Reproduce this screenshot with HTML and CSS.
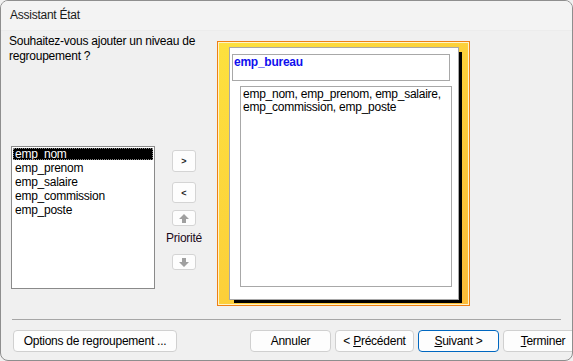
FILE: index.html
```html
<!DOCTYPE html>
<html lang="fr">
<head>
    <meta charset="UTF-8">
    <title>Assistant État</title>
    <link rel="stylesheet" href="styles.css">
</head>
<body>
    <div class="window">
        <div class="titlebar">Assistant État</div>
        <div class="main">
            <div class="left">
                <p class="question">Souhaitez-vous ajouter un niveau de regroupement ?</p>
                <div class="picker">
                    <ul class="listbox">
                        <li class="selected"><span>emp_nom</span></li>
                        <li>emp_prenom</li>
                        <li>emp_salaire</li>
                        <li>emp_commission</li>
                        <li>emp_poste</li>
                    </ul>
                    <div class="movebtns">
                        <button class="small btn-add">&gt;</button>
                        <button class="small btn-remove">&lt;</button>
                        <button class="small arrow">
                            <svg width="10" height="9" viewBox="0 0 10 9"><path d="M5 0 L10 5 L7 5 L7 9 L3 9 L3 5 L0 5 Z" fill="#a0a0a0"/></svg>
                        </button>
                        <span class="prio">Priorité</span>
                        <button class="small arrow">
                            <svg width="10" height="9" viewBox="0 0 10 9"><path d="M5 9 L10 4 L7 4 L7 0 L3 0 L3 4 L0 4 Z" fill="#a0a0a0"/></svg>
                        </button>
                    </div>
                </div>
            </div>
            <div class="preview">
                <div class="page">
                    <div class="group">emp_bureau</div>
                    <div class="detail">emp_nom, emp_prenom, emp_salaire, emp_commission, emp_poste</div>
                </div>
            </div>
        </div>
        <div class="sep"></div>
        <div class="footer">
            <button class="btn btn-options">Options de re<u>g</u>roupement ...</button>
            <button class="btn btn-cancel">Annuler</button>
            <button class="btn btn-prev">&lt; <u>P</u>récédent</button>
            <button class="btn btn-next"><u>S</u>uivant &gt;</button>
            <button class="btn btn-finish"><u>T</u>erminer</button>
        </div>
    </div>
</body>
</html>
```

FILE: styles.css
```css
html, body {
    margin: 0;
    padding: 0;
    background: #f0f0f0;
}
body {
    font-family: "Liberation Sans", Arial, sans-serif;
    font-size: 12px;
    letter-spacing: -0.25px;
    color: #000;
}
.window {
    width: 573px;
    height: 361px;
    box-sizing: border-box;
    border: 1px solid #8e8e8e;
    border-radius: 8px;
    background: #f0f0f0;
    overflow: hidden;
    display: flex;
    flex-direction: column;
}
.titlebar {
    height: 29px;
    line-height: 28px;
    padding-left: 9px;
    background: #f3f3f3;
    border-bottom: 1px solid #ececec;
    color: #1a1a1a;
}
.main {
    height: 288px;
    display: flex;
    align-items: flex-start;
    padding-left: 8px;
}
.left {
    width: 208px;
}
.question {
    margin: 3px 0 0 0;
    line-height: 15px;
    width: 200px;
}
.picker {
    display: flex;
    align-items: flex-start;
    margin-top: 82px;
}
.listbox {
    list-style: none;
    margin: 0 0 0 2px;
    padding: 1px;
    width: 140px;
    height: 139px;
    background: #fff;
    border: 1px solid #8a8a8a;
}
.listbox li {
    height: 14px;
    line-height: 14px;
    padding-left: 2px;
}
.listbox li.selected {
    background: #000;
    color: #fff;
    height: 12px;
    line-height: 12px;
    margin-bottom: 1px;
    outline: 1px dotted #888;
    outline-offset: -1px;
}
.movebtns {
    width: 44px;
    margin-left: 7px;
    display: flex;
    flex-direction: column;
    align-items: center;
    padding-top: 4px;
}
.small {
    width: 24px;
    height: 22px;
    padding: 0;
    background: #fdfdfd;
    border: 1px solid #d4d4d4;
    border-radius: 3px;
    font-family: "Liberation Sans", Arial, sans-serif;
    font-size: 9px;
    font-weight: bold;
    color: #222;
    display: flex;
    align-items: center;
    justify-content: center;
}
.btn-remove {
    margin-top: 10px;
    height: 21px;
}
.arrow {
    height: 16px;
    margin-top: 7px;
}
.prio {
    display: block;
    line-height: 14px;
    margin-top: 5px;
    color: #1a0a1a;
}
.prio + .arrow {
    margin-top: 9px;
}
.preview {
    margin-top: 10px;
    width: 253px;
    height: 265px;
    box-sizing: border-box;
    border: 1px solid #ef7f14;
    box-shadow: inset 0 0 0 1px #fff4c8;
    background: linear-gradient(135deg, #fde13e 0%, #fcd03a 50%, #fbbc38 100%);
    padding: 5px 0 0 11px;
}
.page {
    width: 230px;
    height: 253px;
    box-sizing: border-box;
    border: 1px solid #a8a8a8;
    background: #fff;
    box-shadow: 4px 4px 0 -1px #000;
    padding: 6px 0 0 2px;
}
.group {
    width: 218px;
    height: 27px;
    box-sizing: border-box;
    border: 1px solid #a8a8a8;
    padding: 0 0 0 1px;
    font-weight: bold;
    color: #1010ee;
}
.detail {
    width: 212px;
    height: 201px;
    box-sizing: border-box;
    margin: 5px 0 0 8px;
    border: 1px solid #a8a8a8;
    padding: 1px 0 0 2px;
    line-height: 13px;
}
.sep {
    height: 1px;
    margin: 0 11px;
    background: #a6a6a6;
}
.footer {
    display: flex;
    gap: 4px;
    padding: 10px 0 0 12px;
}
.btn {
    flex: none;
    height: 22px;
    padding: 0;
    background: #fdfdfd;
    border: 1px solid #d0d0d0;
    border-radius: 4px;
    font-family: "Liberation Sans", Arial, sans-serif;
    font-size: 12px;
    letter-spacing: -0.25px;
    color: #000;
}
.btn-options {
    width: 164px;
}
.btn-cancel {
    width: 81px;
    margin-left: 69px;
}
.btn-prev {
    width: 79px;
}
.btn-next {
    width: 81px;
    border-color: #0067c0;
}
.btn-finish {
    width: 80px;
}
```
